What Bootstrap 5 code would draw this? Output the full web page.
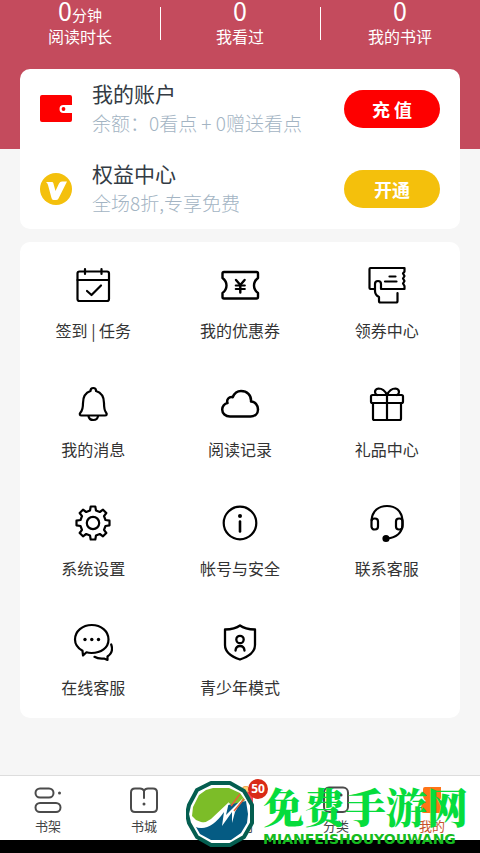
<!DOCTYPE html>
<html lang="zh-CN">
<head>
<meta charset="utf-8">
<meta name="viewport" content="width=device-width, initial-scale=1">
<title>我的</title>
<link href="https://cdn.jsdelivr.net/npm/bootstrap@5.3.0/dist/css/bootstrap.min.css" rel="stylesheet">
<style>
  body { font-family: "Noto Sans CJK SC", sans-serif; background: #f6f6f6; color: #333; }
  a { color: inherit; text-decoration: none; }
  .profile-head { background: #c44b5d; color: #fff; padding-bottom: 101px; }
  .stat { line-height: 24px; font-size: 16px; }
  .stat-value { height: 24px; line-height: 20px; font-size: 15px; }
  .stat-num { font-size: 25px; }
  .stat + .stat::before { content: ""; position: absolute; left: 0; top: 7px; width: 1px; height: 33px; background: #fff; }
  .panels { margin-top: -80px; padding: 0 20px; }
  .panel { background: #fff; border-radius: 10px; }
  .account { height: 80px; padding: 0 20px; gap: 20px; }
  .account-text { padding-bottom: 2px; }
  .account h2 { font-size: 21px; line-height: 29px; margin: 0; font-weight: 400; color: #333b44; }
  .account p { font-size: 19px; line-height: 30px; margin: 0; color: #a3b4c3; font-weight: 300; }
  .pill { width: 96px; height: 38px; padding: 0; border: 0; font-size: 18px; font-weight: 700; color: #fff; }
  .pill-red, .pill-red:hover { background: #fe0000; color: #fff; }
  .pill-gold, .pill-gold:hover { background: #f4c00c; color: #fff; }
  .services { margin-top: 13px; }
  .service { padding: 23px 0 19px; gap: 13px; font-size: 16px; line-height: 24px; }
  .line-icon { width: 40px; height: 40px; fill: none; stroke: #000; stroke-width: 2.2; stroke-linecap: round; stroke-linejoin: round; }
  .tabs { background: #fff; border-top: 1px solid #ddd; border-bottom: 13px solid #000; }
  .tab { height: 64px; padding-top: 10px; font-size: 13px; line-height: 20px; gap: 2px; color: #444; }
  .tab svg { width: 30px; height: 28px; fill: none; stroke: #4b4b4b; stroke-width: 2; stroke-linecap: round; stroke-linejoin: round; }
  .tab.current { color: #c8532c; }
  .count { position: absolute; left: 50%; top: 3px; margin-left: 8px; width: 20px; height: 20px; border-radius: 50%; background: #d92a17; color: #fff; font: 700 12px/20px "Noto Sans", sans-serif; text-align: center; z-index: 3; }
  .site-mark { position: absolute; right: 12px; bottom: -7px; gap: 9px; pointer-events: none; z-index: 2; color: #06dc3c; }
  .site-mark svg { width: 68px; height: 66px; }
  .site-name { font: 900 41px/50px "Noto Serif CJK SC", "Noto Sans CJK SC", serif; }
  .site-latin { font: 700 14px/16px "DejaVu Sans", sans-serif; color: #16bc20; }
</style>
<script src="https://cdn.jsdelivr.net/npm/bootstrap@5.3.0/dist/js/bootstrap.bundle.min.js"></script>
</head>
<body class="d-flex flex-column min-vh-100">
<header class="profile-head d-flex text-center">
  <div class="stat col position-relative"><div class="stat-value d-flex justify-content-center align-items-baseline"><span class="stat-num">0</span><span>分钟</span></div><div>阅读时长</div></div>
  <div class="stat col position-relative"><div class="stat-value d-flex justify-content-center align-items-baseline"><span class="stat-num">0</span></div><div>我看过</div></div>
  <div class="stat col position-relative"><div class="stat-value d-flex justify-content-center align-items-baseline"><span class="stat-num">0</span></div><div>我的书评</div></div>
</header>

<main class="panels">
  <section class="panel">
    <div class="account d-flex align-items-center">
      <svg width="32" height="32" viewBox="0 0 32 32" aria-hidden="true"><path fill="#fe0000" d="M2 2H30Q32 2 32 4V12H23.500A4 4 0 0 0 23.500 20H32V27Q32 29 30 29H2Q0 29 0 27V4Q0 2 2 2Z"/><circle cx="23.500" cy="16" r="1.900" fill="#fe0000"/></svg>
      <div class="account-text flex-grow-1"><h2>我的账户</h2><p>余额：0看点 + 0赠送看点</p></div>
      <button type="button" class="btn rounded-pill pill pill-red">充 值</button>
    </div>
    <div class="account d-flex align-items-center">
      <svg width="32" height="32" viewBox="0 0 32 32" aria-hidden="true"><circle cx="16" cy="16" r="16" fill="#f4c00c"/><path fill="#fff" d="M6 9H12Q13 9 13.300 10L15.500 18 19 10.500Q20 8.500 22 8.500H27L18.500 25.500Q17.700 27 16 27H13.500Q12 27 11.500 25L8 12Q7.500 10 6 9Z"/></svg>
      <div class="account-text flex-grow-1"><h2>权益中心</h2><p>全场8折,专享免费</p></div>
      <button type="button" class="btn rounded-pill pill pill-gold">开通</button>
    </div>
  </section>

  <nav class="panel services row row-cols-3 g-0" aria-label="服务">
    <a href="#" class="col service d-flex flex-column align-items-center">
      <svg class="line-icon" viewBox="0 0 40 40"><rect x="4.500" y="6.500" width="31.500" height="29.500" rx="2"/><path d="M4.500 15H36M12 4V9M28.500 4V9M14 26 18.500 30 28 20.500"/></svg>签到 | 任务</a>
    <a href="#" class="col service d-flex flex-column align-items-center">
      <svg class="line-icon" viewBox="0 0 40 40"><path stroke-width="2.400" d="M4 7H36.500Q38 7 38 8.500V13Q34 16 34 20.500T38 28V32Q38 33.500 36.500 33.500H4Q2.500 33.500 2.500 32V28Q6.500 25 6.500 20.500T2.500 13V8.500Q2.500 7 4 7Z"/><path stroke-width="2.400" d="M16 15 20.300 20 24.600 15M20.300 20V27.500"/><path d="M15.800 20.500H24.800M15.800 24H24.800"/></svg>我的优惠券</a>
    <a href="#" class="col service d-flex flex-column align-items-center">
      <svg class="line-icon" viewBox="0 0 40 40"><path d="M7 24H3.500Q2.500 24 2.500 23V4Q2.500 3 3.500 3H37.500V6.500L36 8.500 37.500 11 36 13.500 37.500 16 36 18.500 37.500 21V24H14V19Q14 16 11 16T8 19V26Q8 30 12 32V36Q12 37.500 13.500 37.500H29Q30.500 37.500 30.500 36V28"/><path d="M22.500 11.500H28.500M18 16.500H29.500"/></svg>领券中心</a>
    <a href="#" class="col service d-flex flex-column align-items-center">
      <svg class="line-icon" viewBox="0 0 40 40"><path d="M17.500 7Q17.500 4 20.300 4T23 7Q31 9.500 31 19 31 26 33 28.500C34.500 30.500 33.500 31.500 32 31.500H8.500C7 31.500 6 30.500 7.500 28.500Q10 26 10 19 10 9.500 17.500 7Z"/><path d="M15.500 32Q16 36 20.300 36T25 32"/></svg>我的消息</a>
    <a href="#" class="col service d-flex flex-column align-items-center">
      <svg class="line-icon" viewBox="0 0 40 40"><path stroke-width="2.500" d="M10 32.500H30.500C35 32.500 38 29.500 38 25.500 38 21 35 17.500 31 17.500 31.500 11 27 7 21 7 17 7 14.500 9 12.700 13.200 9 12.500 6.200 15.500 7.500 19 4.500 19.500 2.200 22.500 2.200 25.500 2.200 29.500 5.500 32.500 10 32.500Z"/></svg>阅读记录</a>
    <a href="#" class="col service d-flex flex-column align-items-center">
      <svg class="line-icon" viewBox="0 0 40 40"><rect x="4" y="11" width="32" height="8" rx="1.500"/><path d="M6 19.500V34.500Q6 36 7.500 36H32.500Q34 36 34 34.500V19.500M20 11V36M20 11Q17 4.500 11.500 4.500 8 5 8 8 8 10 10 11M20 11Q23 4.500 28.500 4.500 32 5 32 8 32 10 30 11"/></svg>礼品中心</a>
    <a href="#" class="col service d-flex flex-column align-items-center">
      <svg class="line-icon" viewBox="0 0 40 40"><path d="M17 7.500 17.700 3.500H22.300L23 7.500 26.800 9 30 6.700 33.300 10 31 13.200 32.500 17 36.500 17.700V22.300L32.500 23 31 26.800 33.300 30 30 33.300 26.800 31 23 32.500 22.300 36.500H17.700L17 32.500 13.200 31 10 33.300 6.700 30 9 26.800 7.500 23 3.500 22.300V17.700L7.500 17 9 13.200 6.700 10 10 6.700 13.200 9Z"/><circle cx="20" cy="20" r="6.200"/></svg>系统设置</a>
    <a href="#" class="col service d-flex flex-column align-items-center">
      <svg class="line-icon" viewBox="0 0 40 40"><circle cx="20" cy="20" r="16.300"/><path stroke-width="2.600" d="M20 18.500V28.500"/><circle cx="20" cy="13" r="2" fill="#000" stroke="none"/></svg>帐号与安全</a>
    <a href="#" class="col service d-flex flex-column align-items-center">
      <svg class="line-icon" viewBox="0 0 40 40"><path d="M4.500 17C5.500 8 11.500 3 20 3S34.500 8 35.500 17V22Q34.500 34 20 35.500"/><rect x="4.500" y="15.500" width="6.500" height="11" rx="3"/><rect x="29" y="15.500" width="6.500" height="11" rx="3"/><circle cx="19" cy="35.500" r="2.500" fill="#000"/></svg>联系客服</a>
    <a href="#" class="col service d-flex flex-column align-items-center">
      <svg class="line-icon" viewBox="0 0 40 40"><path d="M9.500 28.800C4.500 26 2 22 2 17.500 2 9 9.500 3 18.800 3S35.500 9 35.500 17.500 28 31 18.500 31Q15.500 31 13.500 30.300L10 33.500Z"/><path d="M38.200 22.500Q41 30 34.500 34.500V38L31 36.500Q25 37 21.500 34.800"/><g fill="#000" stroke="none"><circle cx="12" cy="17.500" r="1.700"/><circle cx="18.800" cy="17.500" r="1.700"/><circle cx="25.500" cy="17.500" r="1.700"/></g></svg>在线客服</a>
    <a href="#" class="col service d-flex flex-column align-items-center">
      <svg class="line-icon" viewBox="0 0 40 40"><path stroke-width="2.300" d="M20 3.500Q25 7.300 35 7.500V23C35 30 29 34.500 20 37.500 11 34.500 5 30 5 23V7.500Q15 7.300 20 3.500Z"/><circle cx="20" cy="17.500" r="3.700" stroke-width="2.300"/><path stroke-width="2.300" d="M15.500 28.500Q16 24 20 24T24.500 28.500"/></svg>青少年模式</a>
  </nav>
</main>

<nav class="tabs d-flex mt-auto position-relative" aria-label="主导航">
  <a href="#" class="tab col d-flex flex-column align-items-center"><svg viewBox="0 0 30 28"><rect x="2.500" y="2.500" width="18" height="9" rx="4.500"/><rect x="2.500" y="17" width="25" height="9" rx="4.500"/><circle cx="26.500" cy="7" r="1.500" fill="#4b4b4b" stroke="none"/></svg>书架</a>
  <a href="#" class="tab col d-flex flex-column align-items-center"><svg viewBox="0 0 30 28"><path d="M15 12V5Q14 2.500 11 2.500H6Q2 2.500 2 6.500V22Q2 26 6 26H24Q28 26 28 22V6.500Q28 2.500 24 2.500H19Q16 2.500 15 5"/><circle cx="15" cy="18" r="1.500" fill="#4b4b4b" stroke="none"/></svg>书城</a>
  <a href="#" class="tab col d-flex flex-column align-items-center position-relative"><svg viewBox="0 0 30 28"><rect x="4" y="6" width="24" height="20" rx="3" fill="#f04758" stroke="none"/><path d="M15 7Q5 8 7 2 11-3 15 5 20-3 24 2 25 8 15 7Z" fill="#ffd278" stroke="#ef9b43" stroke-width="1"/></svg>福利<span class="count">50</span></a>
  <a href="#" class="tab col d-flex flex-column align-items-center"><svg viewBox="0 0 30 28"><rect x="3" y="1.500" width="24" height="24.500" rx="5"/><circle cx="20" cy="9" r="1.600" fill="#4b4b4b" stroke="none"/></svg>分类</a>
  <a href="#" class="tab current col d-flex flex-column align-items-center" aria-current="page"><svg viewBox="0 0 30 28"><path fill="#ff7417" stroke="none" d="M8 1H24V11Q24 14 21 15 26 17 26 22V24Q26 27 23 27H7Q4 27 4 24V22Q4 17 9 15 6 13 6 9V3Q6 1 8 1Z"/></svg>我的</a>
  <div class="site-mark d-flex align-items-center">
    <svg viewBox="0 0 68 66" aria-hidden="true"><path d="M25 2H44L58 10 66 24V42L58 56 44 64H25L11 56 3 42 1 33 3 24 11 9Z" fill="#fff" stroke="#045e50" stroke-width="4" stroke-linejoin="round"/><path d="M20 9 27 7H43L54 12 59 19 50 27 43 22 30 35 20 43 10 39 6 35 7 26 13 14Z" fill="#7cbd28"/><path d="M10 46Q22 49 31 37L42 24 60 20 62 33 61 42 55 52 45 59H25L14 53Z" fill="#055b83"/><path d="M6 38Q16 45 25 38L43 21 40 34 57 17 49 31 46 42 46 31 36 45 38 31Q24 51 10 46Z" fill="#fff"/><path d="M45 25 54 13M48 30 58 18" stroke="#e66037" stroke-width="1.500"/></svg>
    <div><div class="site-name">免费手游网</div><div class="site-latin">MIANFEISHOUYOUWANG</div></div>
  </div>
</nav>
</body>
</html>
